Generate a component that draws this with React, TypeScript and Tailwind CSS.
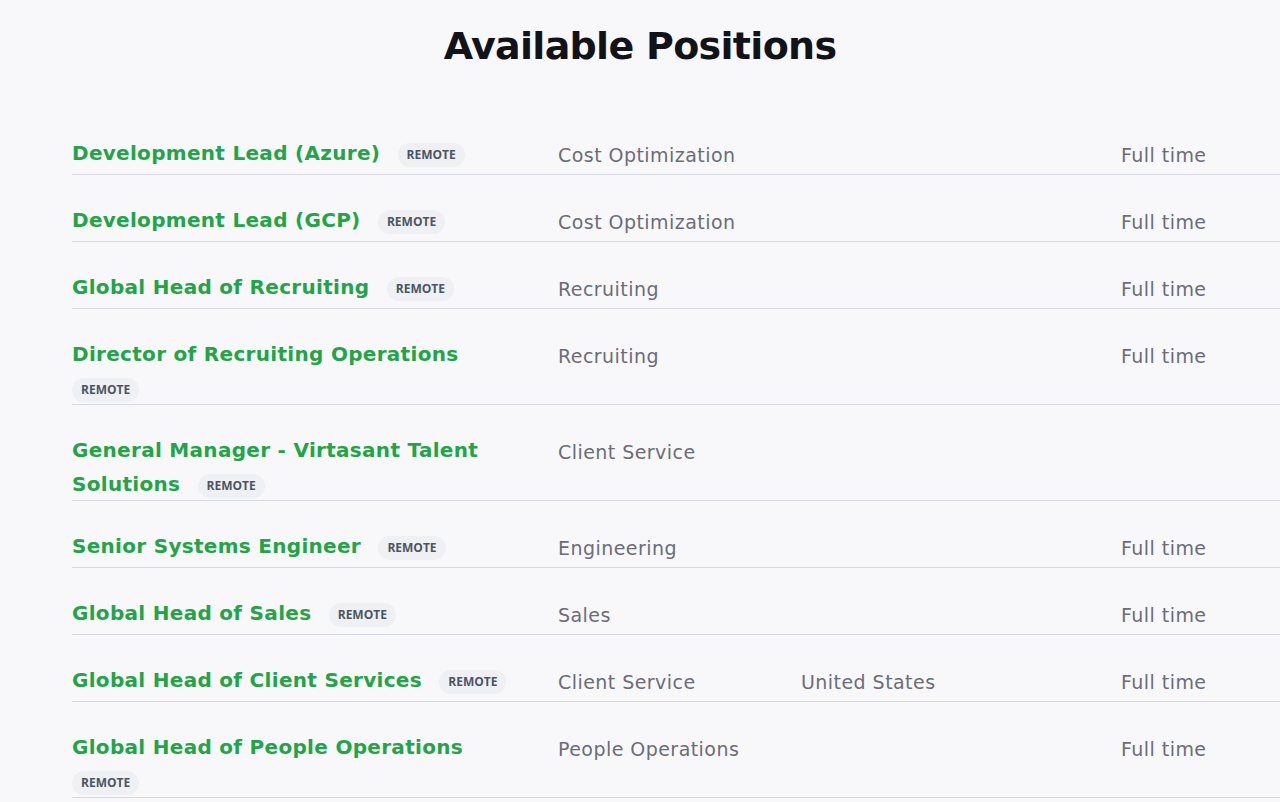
import React from "react"

type Position = {
  title: string
  department: string
  location?: string
  type?: string
}

const positions: Position[] = [
  { title: "Development Lead (Azure)", department: "Cost Optimization", type: "Full time" },
  { title: "Development Lead (GCP)", department: "Cost Optimization", type: "Full time" },
  { title: "Global Head of Recruiting", department: "Recruiting", type: "Full time" },
  { title: "Director of Recruiting Operations", department: "Recruiting", type: "Full time" },
  { title: "General Manager - Virtasant Talent Solutions", department: "Client Service" },
  { title: "Senior Systems Engineer", department: "Engineering", type: "Full time" },
  { title: "Global Head of Sales", department: "Sales", type: "Full time" },
  { title: "Global Head of Client Services", department: "Client Service", location: "United States", type: "Full time" },
  { title: "Global Head of People Operations", department: "People Operations", type: "Full time" },
]

function RemoteBadge() {
  return (
    <span className="-my-[6px] inline-flex h-6 items-center rounded-full bg-[#eef0f3] px-[9px] align-middle font-['Open_Sans',sans-serif] text-xs font-bold leading-none text-[#4b5563]">
      REMOTE
    </span>
  )
}

function PositionRow({ position }: { position: Position }) {
  return (
    <div className="grid grid-cols-[486px_243px_320px_1fr] border-b border-[#d6d9e3] pt-[28px] font-['DejaVu_Sans','Liberation_Sans',sans-serif]">
      <div className="-mb-[1px] pr-[36px] text-[20px] leading-[34px]">
        <a href="#" className="font-bold tracking-[0.3px] text-[#22a447]">
          {position.title}
        </a>
        {/* collapsible space so a wrapped badge starts flush left */}
        <span className="[word-spacing:11px]"> </span>
        <RemoteBadge />
      </div>
      <div className="text-[19px] leading-[38px] tracking-[0.45px] text-[#6b6c78]">{position.department}</div>
      <div className="text-[19px] leading-[38px] tracking-[0.45px] text-[#6b6c78]">{position.location ?? ""}</div>
      <div className="text-[19px] leading-[38px] tracking-[0.45px] text-[#6b6c78]">{position.type ?? ""}</div>
    </div>
  )
}

export default function App() {
  return (
    <div className="min-h-[802px] w-full overflow-hidden bg-[#f8f8fa]">
      <h1 className="pt-[21px] text-center font-['DejaVu_Sans','Liberation_Sans',sans-serif] text-[38px] font-bold leading-[50px] tracking-[-0.7px] text-[#111318]">
        Available Positions
      </h1>
      <div className="mt-[37px] pl-[72px]">
        {positions.map((p) => (
          <PositionRow key={p.title} position={p} />
        ))}
      </div>
    </div>
  )
}
